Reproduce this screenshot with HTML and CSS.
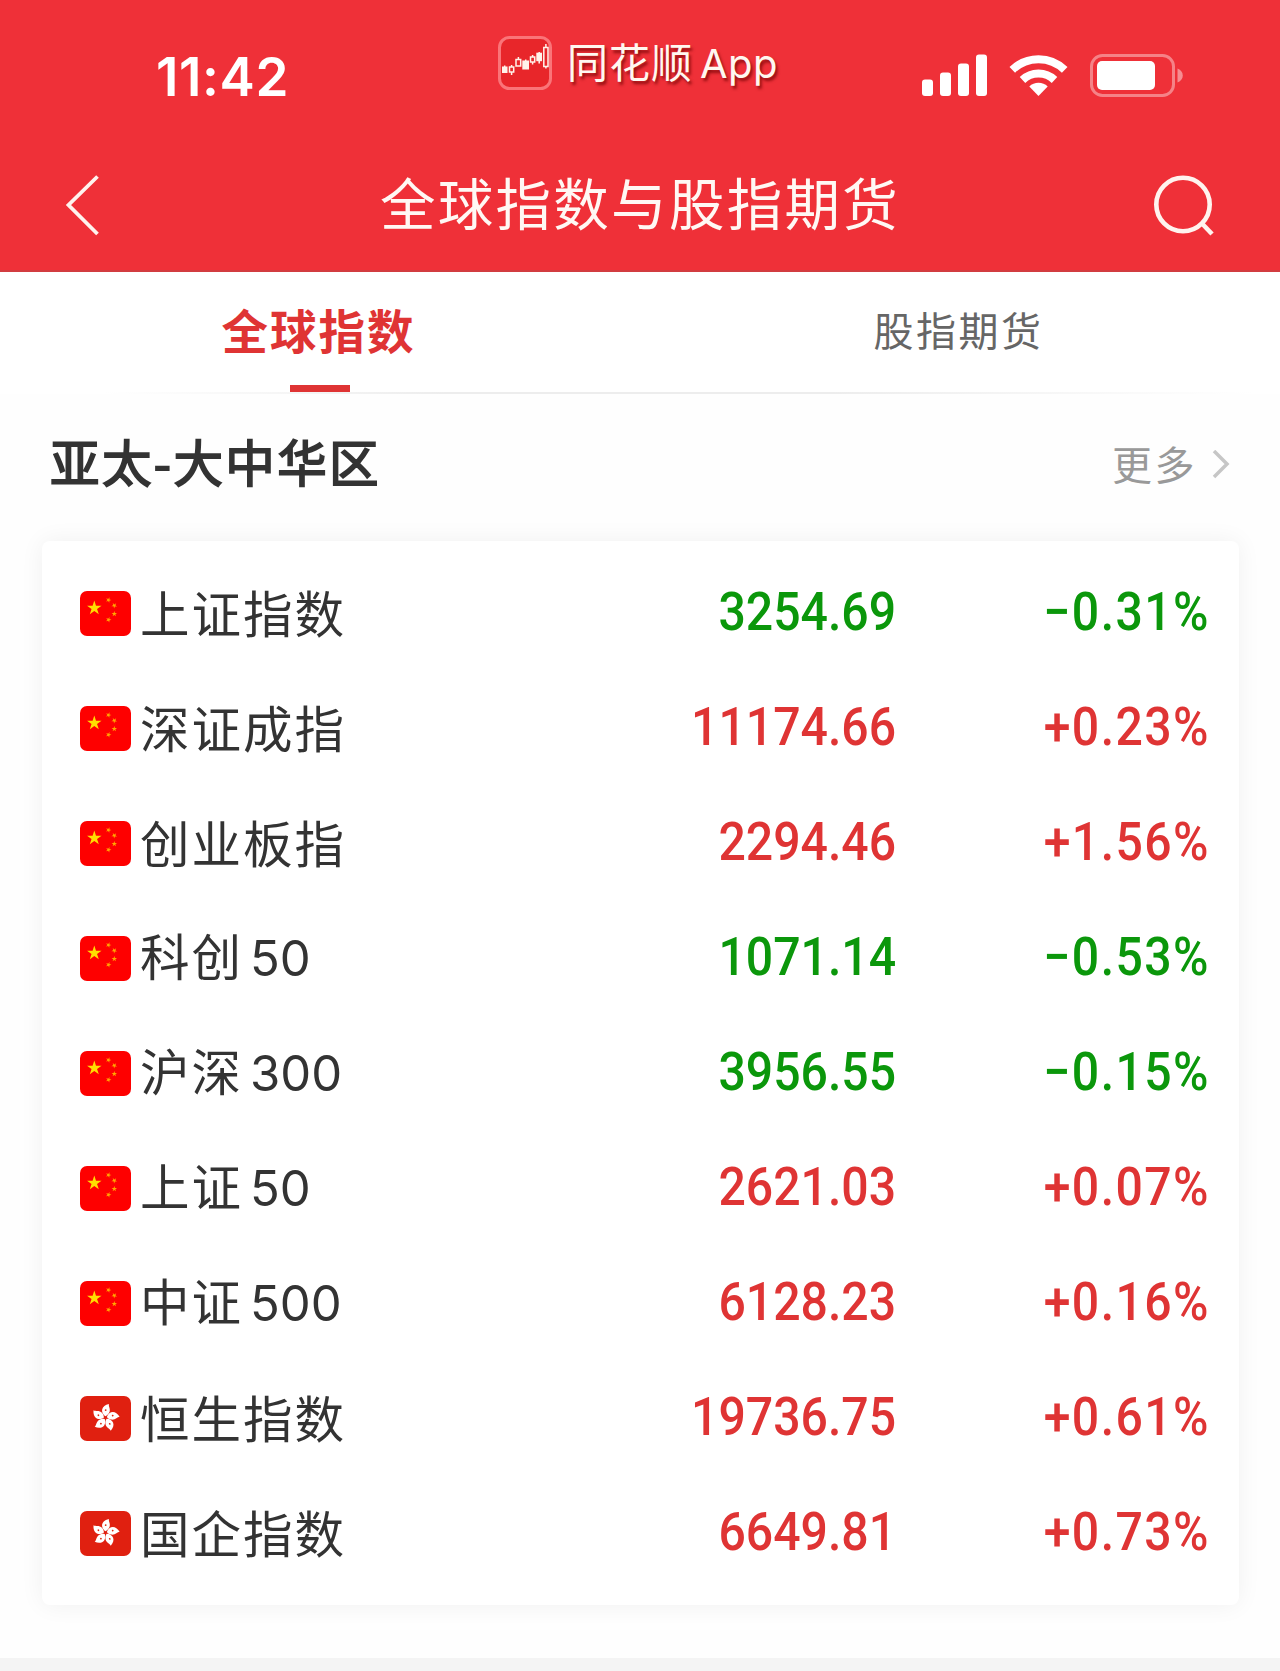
FILE: index.html
```
<!DOCTYPE html>
<html lang="zh-CN">
<head>
    <meta charset="UTF-8">
    <meta name="viewport" content="width=device-width, initial-scale=1.0">
    <title>全球指数与股指期货</title>
    <link rel="stylesheet" href="styles.css">
</head>
<body>

    <!-- shared flag icons -->
    <svg class="sprite" width="0" height="0">
        <defs>
            <path id="star" d="M0-1L.2245-.309H.951L.363.118.588.809 0 .382-.588.809-.363.118-.951-.309H-.2245Z"/>
            <g id="petal">
                <path d="M-.5-1.500C-6-5-5.500-11.500 2-14C1.500-11.500 4.800-9 3-5C2.200-3.300 1-2.200-.5-1.500Z" fill="#fff"/>
                <circle cx="-.6" cy="-7.500" r=".9" fill="#de2910"/>
            </g>
        </defs>
        <symbol id="flag-cn" viewBox="0 0 51 45">
            <rect width="51" height="45" rx="7" fill="#fe0000"/>
            <g fill="#ffde00">
                <use href="#star" transform="translate(14.300 17) scale(7.600)"/>
                <g fill="#ffa800">
                    <use href="#star" transform="translate(28.500 9) rotate(20) scale(2.900)"/>
                    <use href="#star" transform="translate(34.300 14.500) rotate(40) scale(2.900)"/>
                    <use href="#star" transform="translate(34.300 23) scale(2.900)"/>
                    <use href="#star" transform="translate(28.500 28.700) rotate(20) scale(2.900)"/>
                </g>
            </g>
        </symbol>
        <symbol id="flag-hk" viewBox="0 0 51 45">
            <rect width="51" height="45" rx="7" fill="#e02010"/>
            <g transform="translate(25.500 21.700) rotate(6)">
                <use href="#petal"/>
                <use href="#petal" transform="rotate(72)"/>
                <use href="#petal" transform="rotate(144)"/>
                <use href="#petal" transform="rotate(216)"/>
                <use href="#petal" transform="rotate(288)"/>
            </g>
        </symbol>
    </svg>

    <header class="header">
        <div class="status-bar">
            <div class="time">11:42</div>
            <div class="brand">
                <svg class="brand-icon" width="54" height="54" viewBox="0 0 54 54">
                    <rect x="1.500" y="1.500" width="51" height="51" rx="10" fill="#e8262a" stroke="#fa7478" stroke-width="3"/>
                    <g fill="#fff3ea">
                        <rect x="4" y="30.500" width="5.500" height="6.500"/>
                        <rect x="24.300" y="24.500" width="6.700" height="9"/>
                        <rect x="38.300" y="16.700" width="5.700" height="8.500"/>
                    </g>
                    <g fill="none" stroke="#fff3ea" stroke-width="1.500">
                        <path d="M6.700 29.500v2M27.700 23.500v2M41.200 16v11.500"/>
                        <path d="M11.500 31h4.200v5h-4.200zM13.600 29v2M13.600 36v3"/>
                        <path d="M18 23.500h4.700v6.500h-4.700zM20.400 21v2.500"/>
                        <path d="M32.500 21h4.200v5h-4.200zM34.600 19v2M34.600 26v2.500"/>
                        <path d="M45.800 11.500h4.200v19h-4.200zM47.900 8v3.500M47.900 30.500v2"/>
                    </g>
                </svg>
                <span class="brand-name">同花顺<span class="brand-app">App</span></span>
            </div>
            <svg class="status-icons" width="262" height="44" viewBox="0 0 262 44" fill="#fff">
                <rect x="0" y="26.500" width="11" height="16.500" rx="3"/>
                <rect x="18" y="19.500" width="11" height="23.500" rx="3"/>
                <rect x="36" y="10.500" width="11" height="32.500" rx="3"/>
                <rect x="54" y="1.500" width="11" height="41.500" rx="3"/>
                <g fill="none" stroke="#fff" stroke-width="8">
                    <path d="M90.300 16.800A37.500 37.500 0 0 1 142.700 16.800"/>
                    <path d="M100.500 27A23.200 23.200 0 0 1 132.500 27"/>
                </g>
                <path d="M116.500 43L107.300 33.500A13.200 13.200 0 0 1 125.700 33.500Z"/>
                <rect x="169.500" y="2.500" width="82" height="40" rx="11" fill="none" stroke="#fff" stroke-opacity=".4" stroke-width="3"/>
                <rect x="175" y="8" width="58" height="29" rx="5"/>
                <path d="M255.500 15.500C262.500 18 262.500 27 255.500 29.500Z" opacity=".45"/>
            </svg>
        </div>
        <div class="nav-bar">
            <svg class="back" width="40" height="66" viewBox="0 0 40 66" fill="none" stroke="#fff3ee" stroke-width="3.800">
                <path d="M33.500 4.500L4.500 33L33.500 62"/>
            </svg>
            <h1 class="title">全球指数与股指期货</h1>
            <svg class="search" width="62" height="62" viewBox="0 0 62 62" fill="none" stroke="#fff3ee" stroke-width="4.600">
                <circle cx="30" cy="30.500" r="26.700"/>
                <path d="M49 49.500L59 60"/>
            </svg>
        </div>
    </header>

    <nav class="tabs">
        <div class="tab active">全球指数</div>
        <div class="tab">股指期货</div>
    </nav>

    <main class="section">
        <div class="section-head">
            <h2>亚太-大中华区</h2>
            <div class="more">
                <span>更多</span>
                <svg width="20" height="30" viewBox="0 0 20 30" fill="none" stroke="#c6c6c6" stroke-width="3.500">
                    <path d="M3 1L16 14L3 27"/>
                </svg>
            </div>
        </div>

        <div class="card">
            <div class="row down">
                <svg class="flag"><use href="#flag-cn"/></svg>
                <span class="name">上证指数</span>
                <span class="price">3254.69</span>
                <span class="change">−0.31%</span>
            </div>
            <div class="row up">
                <svg class="flag"><use href="#flag-cn"/></svg>
                <span class="name">深证成指</span>
                <span class="price">11174.66</span>
                <span class="change">+0.23%</span>
            </div>
            <div class="row up">
                <svg class="flag"><use href="#flag-cn"/></svg>
                <span class="name">创业板指</span>
                <span class="price">2294.46</span>
                <span class="change">+1.56%</span>
            </div>
            <div class="row down">
                <svg class="flag"><use href="#flag-cn"/></svg>
                <span class="name">科创<span class="num">50</span></span>
                <span class="price">1071.14</span>
                <span class="change">−0.53%</span>
            </div>
            <div class="row down">
                <svg class="flag"><use href="#flag-cn"/></svg>
                <span class="name">沪深<span class="num">300</span></span>
                <span class="price">3956.55</span>
                <span class="change">−0.15%</span>
            </div>
            <div class="row up">
                <svg class="flag"><use href="#flag-cn"/></svg>
                <span class="name">上证<span class="num">50</span></span>
                <span class="price">2621.03</span>
                <span class="change">+0.07%</span>
            </div>
            <div class="row up">
                <svg class="flag"><use href="#flag-cn"/></svg>
                <span class="name">中证<span class="num">500</span></span>
                <span class="price">6128.23</span>
                <span class="change">+0.16%</span>
            </div>
            <div class="row up">
                <svg class="flag"><use href="#flag-hk"/></svg>
                <span class="name">恒生指数</span>
                <span class="price">19736.75</span>
                <span class="change">+0.61%</span>
            </div>
            <div class="row up">
                <svg class="flag"><use href="#flag-hk"/></svg>
                <span class="name">国企指数</span>
                <span class="price">6649.81</span>
                <span class="change">+0.73%</span>
            </div>
        </div>
    </main>

</body>
</html>
```
FILE: styles.css
```
* {
    box-sizing: border-box;
}
body {
    margin: 0;
    height: 1671px;
    overflow: hidden;
    display: flex;
    flex-direction: column;
    background-color: #f4f4f4;
    font-family: "Noto Sans CJK SC", "Inter", sans-serif;
    color: #333;
}
.sprite {
    position: absolute;
}

/* header */
.header {
    height: 272px;
    background-color: #ef3038;
    border-bottom: 2px solid #d23c40;
    color: #fff;
}
.status-bar {
    height: 136px;
    display: grid;
    grid-template-columns: 498px 424px 1fr;
    align-items: start;
}
.time {
    padding: 45px 0 0 156px;
    font: 600 53px/64px "Inter", sans-serif;
    letter-spacing: 0.6px;
}
.brand {
    display: flex;
    align-items: center;
    padding-top: 36px;
    height: 90px;
}
.brand-name {
    margin-left: 15px;
    padding-bottom: 2px;
    font-size: 41px;
    line-height: 54px;
    letter-spacing: 1px;
    color: #fff8f0;
    text-shadow: 2px 3px 3px rgba(110, 0, 0, 0.7);
}
.brand-app {
    margin-left: 7px;
    font-family: "Inter", sans-serif;
    font-size: 40px;
    letter-spacing: 0.4px;
}
.status-icons {
    margin-top: 53px;
}
.nav-bar {
    height: 134px;
    display: flex;
    align-items: center;
    justify-content: space-between;
    padding: 3px 65px 0 64px;
}
.title {
    margin: 0 0 0 23px;
    padding-bottom: 8px;
    font-size: 55.500px;
    line-height: 80px;
    font-weight: 400;
    letter-spacing: 2.3px;
    color: #fff8f4;
}

/* tabs */
.tabs {
    height: 122px;
    display: flex;
    background: linear-gradient(to right, #fff 8%, #ededed 35%, #ededed 65%, #fff 98%) bottom / 100% 2px no-repeat #fff;
}
.tab {
    flex: 1;
    height: 120px;
    display: flex;
    flex-direction: column;
    align-items: center;
    font-size: 40px;
    line-height: 115px;
    letter-spacing: 2.5px;
    text-indent: -3px;
    color: #666;
}
.tab.active {
    font-size: 46.500px;
    font-weight: 700;
    line-height: 114px;
    letter-spacing: 2px;
    color: #df3434;
}
.tab.active::after {
    content: "";
    width: 60px;
    height: 7px;
    margin-top: -1px;
    background-color: #df3434;
}

/* index list */
.section {
    height: 1264px;
    padding: 0 41px 0 42px;
    background-color: #fefefe;
}
.section-head {
    height: 147px;
    display: flex;
    align-items: center;
    justify-content: space-between;
    padding: 0 8px 6px;
}
.section-head h2 {
    margin: 0;
    padding-bottom: 9px;
    font-size: 49.500px;
    font-weight: 400;
    letter-spacing: 2.4px;
    -webkit-text-stroke: 1.8px #333;
}
.more {
    display: flex;
    align-items: center;
    gap: 14px;
    font-size: 40px;
    letter-spacing: 2.5px;
    color: #999;
}
.more span {
    padding-bottom: 4px;
}
.card {
    height: 1064px;
    padding: 15px 0;
    border-radius: 8px;
    background-color: #fff;
    box-shadow: 0 0 24px rgba(0, 0, 0, 0.06);
}
.row {
    height: 115px;
    display: grid;
    grid-template-columns: 51px 350px 415px 314px;
    align-items: center;
    padding-left: 38px;
}
.flag {
    width: 51px;
    height: 45px;
}
.name {
    padding: 0 0 4px 9px;
    font-size: 49.500px;
    line-height: 72px;
    letter-spacing: 2px;
    white-space: nowrap;
}
.num {
    margin-left: 7px;
    font-family: "Inter", sans-serif;
    font-size: 49px;
    letter-spacing: 0;
}
.price,
.change {
    padding-bottom: 4px;
    font: 500 53.500px/64px "Roboto", sans-serif;
    text-align: right;
    transform: scaleX(0.9);
    transform-origin: right;
}
.change {
    letter-spacing: 1.6px;
}
.up .price,
.up .change {
    color: #df3434;
}
.down .price,
.down .change {
    color: #0b970b;
}
```
